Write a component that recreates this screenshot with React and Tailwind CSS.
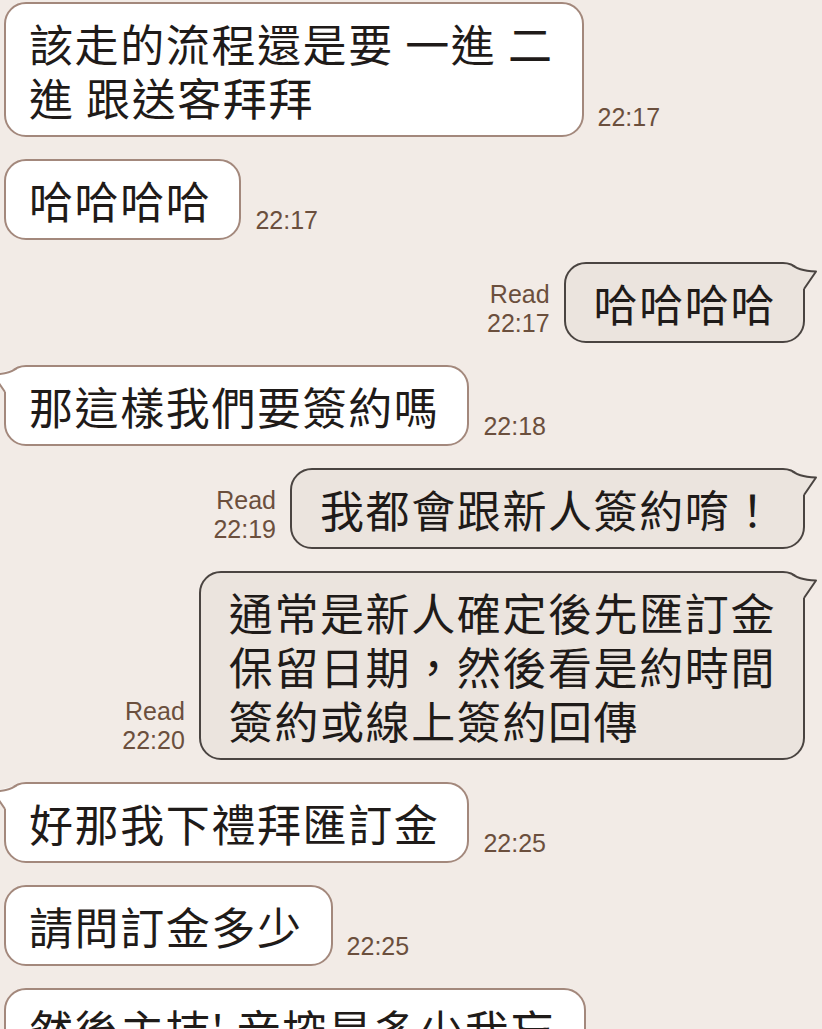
import React from "react";

const messages = [
  { side: "left", lines: ["該走的流程還是要 一進 二", "進 跟送客拜拜"], time: "22:17" },
  { side: "left", lines: ["哈哈哈哈"], time: "22:17" },
  { side: "right", tail: true, lines: ["哈哈哈哈"], time: "22:17" },
  { side: "left", tail: true, lines: ["那這樣我們要簽約嗎"], time: "22:18" },
  { side: "right", tail: true, lines: ["我都會跟新人簽約唷！"], time: "22:19" },
  {
    side: "right",
    tail: true,
    lines: ["通常是新人確定後先匯訂金", "保留日期，然後看是約時間", "簽約或線上簽約回傳"],
    time: "22:20",
  },
  { side: "left", tail: true, lines: ["好那我下禮拜匯訂金"], time: "22:25" },
  { side: "left", lines: ["請問訂金多少"], time: "22:25" },
  { side: "left", lines: ["然後主持' 音控是多少我忘"], time: "" },
];

function TailRight() {
  return (
    <svg
      className="absolute -top-[2px] -right-[2px] overflow-visible"
      width="40"
      height="40"
      viewBox="-40 0 40 40"
    >
      <path d="M -14 3 L 11 9.5 L -1 27 L -4 27 L -4 14 L -12 7 Z" fill="#ebe4de" />
      <path
        d="M -13.5 3 C -9 5.5, -6 8.5, 11 9.5 L -1 27"
        fill="none"
        stroke="#4a4441"
        strokeWidth="2"
        strokeLinejoin="round"
      />
    </svg>
  );
}

function TailLeft() {
  return (
    <svg
      className="absolute -top-[2px] -left-[2px] overflow-visible"
      width="40"
      height="40"
      viewBox="0 0 40 40"
    >
      <path d="M 14 3 L -11 9.5 L 1 27 L 4 27 L 4 14 L 12 7 Z" fill="#ffffff" />
      <path
        d="M 13.5 3 C 9 5.5, 6 8.5, -11 9.5 L 1 27"
        fill="none"
        stroke="#a3887c"
        strokeWidth="2"
        strokeLinejoin="round"
      />
    </svg>
  );
}

function Bubble({ m }) {
  const isRight = m.side === "right";
  return (
    <div
      className={
        isRight
          ? "relative rounded-[22px] border-2 border-[#4a4441] bg-[#ebe4de] pl-[28px] pr-[27px] py-[11.5px]"
          : "relative rounded-[22px] border-2 border-[#a3887c] bg-white pl-[23px] pr-[28px] py-[11.5px]"
      }
    >
      {m.tail && (isRight ? <TailRight /> : <TailLeft />)}
      <div className="relative text-[44px] leading-[54px] tracking-[1.6px] text-[#1f1b19] whitespace-pre font-['Noto_Sans_CJK_TC','Noto_Sans_CJK_SC',sans-serif]">
        {m.lines.map((l, i) => (
          <div key={i}>{l}</div>
        ))}
      </div>
    </div>
  );
}

export default function App() {
  return (
    <div className="w-[822px] h-[1029px] overflow-hidden bg-[#f2ebe6] font-['Liberation_Sans',Arial,sans-serif]">
      <div className="flex flex-col gap-[22px] pt-[2px]">
        {messages.map((m, i) =>
          m.side === "left" ? (
            <div key={i} className="flex items-end gap-[14px] pl-[4px]">
              <Bubble m={m} />
              {m.time && (
                <span className="pb-[5px] text-[25px] leading-[29px] text-[#6b4f3d]">{m.time}</span>
              )}
            </div>
          ) : (
            <div key={i} className="flex items-end justify-end gap-[14px] pr-[17px]">
              <div className="flex flex-col items-end pb-[5px] text-[25px] leading-[29px] text-[#6b4f3d]">
                <span>Read</span>
                <span>{m.time}</span>
              </div>
              <Bubble m={m} />
            </div>
          )
        )}
      </div>
    </div>
  );
}
